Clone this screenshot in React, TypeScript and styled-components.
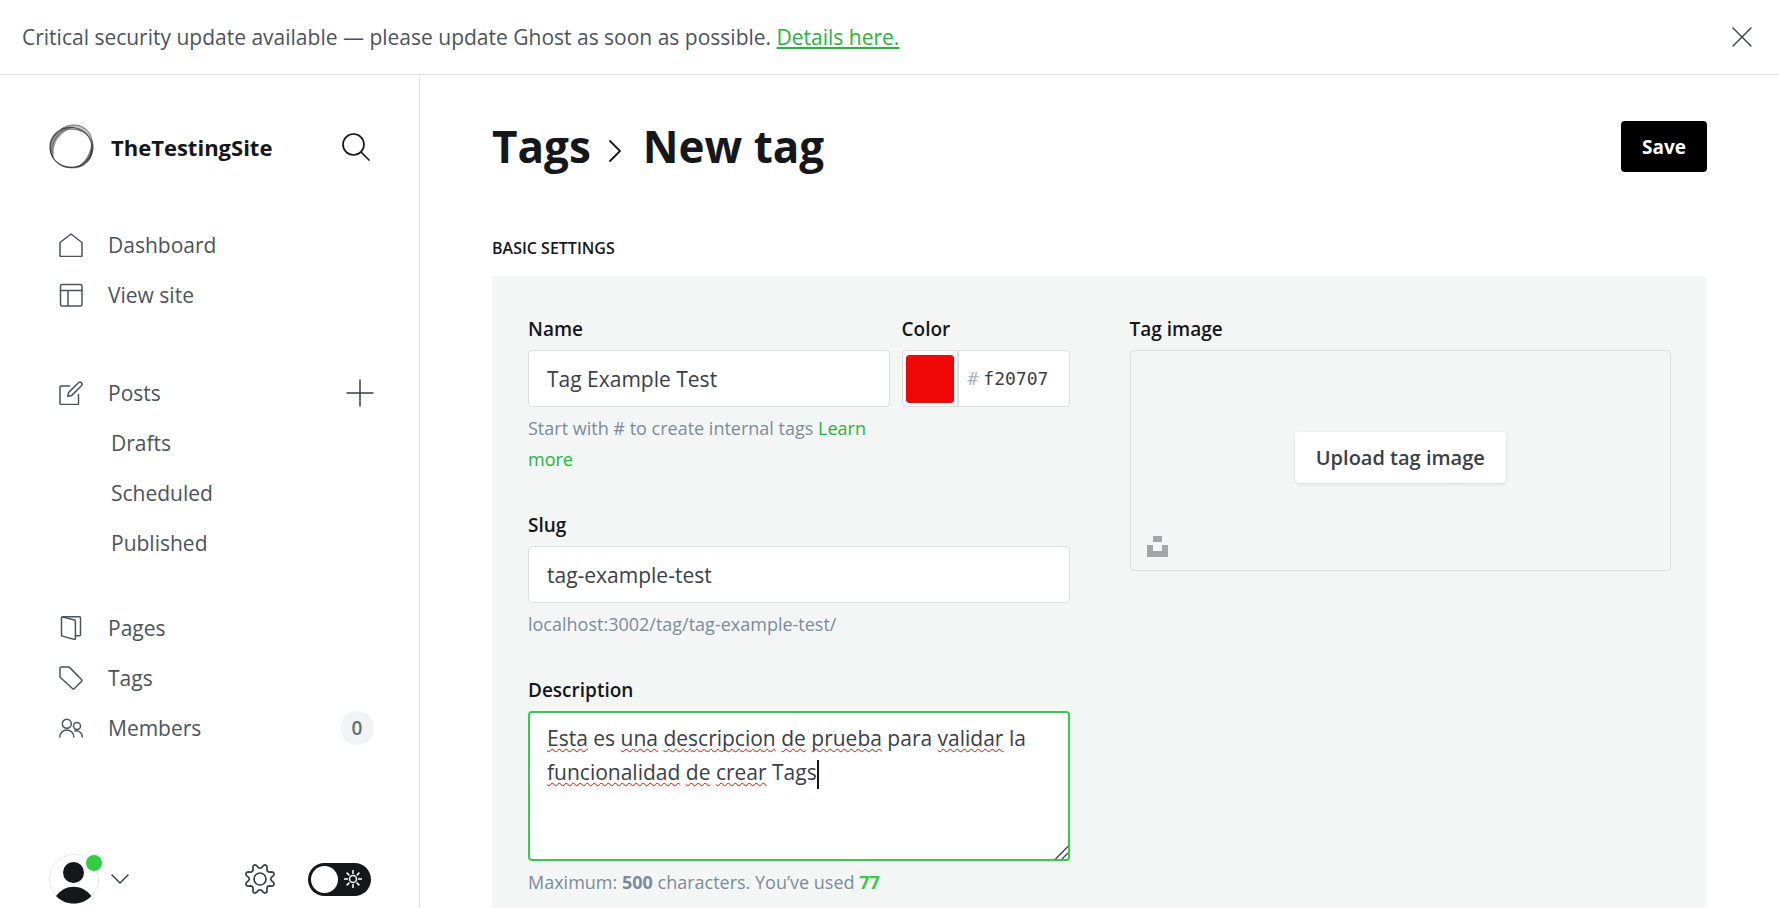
import React, { useState } from "react";
import styled, { createGlobalStyle, css } from "styled-components";

const c = {
  black: "#15171a",
  dark: "#394047",
  text: "#4b545d",
  mid: "#7c8b9a",
  line: "#dddfe1",
  side: "#e3e5e8",
  card: "#f4f6f6",
  green: "#30cf43",
  link: "#26b43a",
};
const sans = `"Open Sans", "Noto Sans", sans-serif`;

const GlobalStyle = createGlobalStyle`
  * { box-sizing: border-box; }
  body { margin: 0; font-family: ${sans}; color: ${c.black}; background: #fff; }
  button, input, textarea { font-family: inherit; margin: 0; }
  a { text-decoration: none; color: inherit; }
  svg { display: block; flex: none; }
`;

const Page = styled.div`
  display: flex;
  flex-direction: column;
  height: 100vh;
`;
const Banner = styled.div`
  display: flex;
  align-items: center;
  justify-content: space-between;
  flex: none;
  height: 75px;
  padding: 0 22px;
  border-bottom: 1px solid ${c.line};
  font-size: 21px;
  color: ${c.text};
`;
const BannerLink = styled.a`
  color: ${c.link};
  text-decoration: underline;
`;
const IconButton = styled.button`
  display: flex;
  align-items: center;
  justify-content: center;
  padding: 0;
  border: 0;
  background: none;
  color: ${c.dark};
  cursor: pointer;
`;
const Body = styled.div`
  display: flex;
  flex: 1;
  min-height: 0;
`;

const Sidebar = styled.nav`
  display: flex;
  flex-direction: column;
  flex: none;
  width: 420px;
  padding: 49px 45px 4px 49px;
  border-right: 1px solid ${c.side};
`;
const SiteHeader = styled.div`
  display: flex;
  align-items: center;
  gap: 17px;
  height: 45px;
  padding-right: 4px;
  margin-bottom: 51px;
`;
const SiteName = styled.div`
  flex: 1;
  font-size: 22px;
  font-weight: 700;
`;
const SearchButton = styled(IconButton)`
  color: ${c.black};
`;
const NavGroup = styled.ul`
  list-style: none;
  margin: 0 0 ${(p: { $gap?: number }) => p.$gap ?? 0}px;
  padding: 0;
`;
const NavRow = styled.li`
  display: flex;
  align-items: center;
  justify-content: space-between;
  height: 50px;
`;
const NavLink = styled.a<{ $sub?: boolean }>`
  display: flex;
  align-items: center;
  gap: 25px;
  padding-left: ${(p) => (p.$sub ? 62 : 10)}px;
  font-size: 21px;
  color: ${c.text};
`;
const Count = styled.span`
  display: flex;
  align-items: center;
  justify-content: center;
  width: 34px;
  height: 34px;
  border-radius: 50%;
  background: #f1f3f4;
  font-size: 19px;
  font-weight: 600;
  color: #626d79;
`;
const SideFooter = styled.div`
  display: flex;
  align-items: center;
  margin-top: auto;
  padding-right: 3px;
`;
const UserButton = styled(IconButton)`
  position: relative;
  gap: 12px;
  margin-right: auto;
`;
const Online = styled.span`
  position: absolute;
  top: 1px;
  left: 37px;
  width: 16px;
  height: 16px;
  border-radius: 50%;
  background: ${c.green};
`;
const Toggle = styled.label`
  position: relative;
  display: flex;
  align-items: center;
  justify-content: space-between;
  width: 63px;
  height: 33px;
  margin-left: 33px;
  padding: 0 9px 0 3px;
  border-radius: 17px;
  background: ${c.black};
  cursor: pointer;
`;
const ToggleInput = styled.input`
  position: absolute;
  inset: 0;
  width: 100%;
  height: 100%;
  margin: 0;
  opacity: 0;
`;
const Knob = styled.span`
  width: 27px;
  height: 27px;
  border-radius: 50%;
  background: #fff;
`;

const Main = styled.main`
  flex: 1;
  min-width: 0;
  padding: 46px 72px 72px;
  overflow-y: auto;
  scrollbar-width: none;
`;
const TopBar = styled.header`
  display: flex;
  align-items: center;
  justify-content: space-between;
  height: 51px;
  margin-bottom: 64px;
`;
const Title = styled.h1`
  display: flex;
  align-items: center;
  gap: 18px;
  margin: 0;
  font-size: 44px;
  line-height: 51px;
  font-weight: 700;

  svg {
    margin: 8px 4px 0 0;
  }
`;
const SaveButton = styled.button`
  height: 51px;
  padding: 0 21px;
  border: 0;
  border-radius: 4px;
  background: #000;
  color: #fff;
  font-size: 19px;
  font-weight: 700;
  cursor: pointer;
`;
const SectionTitle = styled.h2`
  margin: 0 0 16px;
  font-size: 16px;
  line-height: 24px;
  font-weight: 600;
  text-transform: uppercase;
`;
const Card = styled.section`
  display: grid;
  grid-template-columns: 1fr 1fr;
  align-items: start;
  gap: 60px;
  padding: 36px;
  border-radius: 4px;
  background: ${c.card};
`;
const Fields = styled.div`
  display: flex;
  flex-direction: column;
  gap: 33px;
`;
const Pair = styled.div`
  display: grid;
  grid-template-columns: 1fr 168px;
  gap: 12px;
`;
const Label = styled.label`
  display: block;
  margin-bottom: 4px;
  font-size: 19px;
  line-height: 34px;
  font-weight: 600;
`;
const fieldBox = css`
  width: 100%;
  border: 1px solid ${c.line};
  border-radius: 4px;
  background: #fff;
`;
const fieldText = css`
  font-size: 21px;
  line-height: 34px;
  color: ${c.dark};
`;
const TextInput = styled.input`
  ${fieldBox}
  ${fieldText}
  display: block;
  height: 57px;
  padding: 0 18px;
  outline: 0;
`;
const Help = styled.p`
  margin: 6px 0 0;
  font-size: 18px;
  line-height: 31px;
  color: ${c.mid};
`;
const HelpLink = styled.a`
  color: ${c.link};
`;
const Used = styled.b`
  color: ${c.green};
`;
const ColorBox = styled.div`
  ${fieldBox}
  display: flex;
  align-items: center;
  height: 57px;
  font-family: "DejaVu Sans Mono", monospace;
  font-size: 18px;
  color: #a8b2bd;
`;
const Swatch = styled.input`
  width: 48px;
  height: 48px;
  margin: 0 3px;
  padding: 0;
  border: 0;
  border-radius: 3px;
  background: none;
  &::-webkit-color-swatch-wrapper { padding: 0; }
  &::-webkit-color-swatch { border: 0; border-radius: 3px; }
`;
const HexPart = styled.div`
  display: flex;
  align-items: center;
  gap: 5px;
  flex: 1;
  height: 100%;
  padding-left: 9px;
  border-left: 2px solid ${c.line};
`;
const HexInput = styled.input`
  width: 72px;
  padding: 0;
  border: 0;
  outline: 0;
  background: none;
  font: inherit;
  color: ${c.dark};
`;
const AreaWrap = styled.div`
  position: relative;
`;
const areaText = css`
  ${fieldText}
  width: 100%;
  height: 150px;
  padding: 8px 17px;
`;
const Area = styled.textarea`
  ${areaText}
  display: block;
  border: 2px solid ${c.green};
  border-radius: 4px;
  background: #fff;
  outline: 0;
  resize: none;
`;
const SpellLayer = styled.div`
  ${areaText}
  position: absolute;
  inset: 0;
  border: 2px solid transparent;
  color: transparent;
  pointer-events: none;
  white-space: pre-wrap;
`;
const Misspelt = styled.span`
  text-decoration: underline wavy #f00 1px;
  text-underline-offset: 2px;
  text-decoration-skip-ink: none;
`;
const Caret = styled.span`
  display: inline-block;
  width: 2px;
  height: 29px;
  vertical-align: middle;
  background: ${c.black};
`;
const Grip = styled.svg`
  position: absolute;
  right: 2px;
  bottom: 2px;
`;
const ImageBox = styled.div`
  position: relative;
  display: flex;
  align-items: center;
  justify-content: center;
  height: 221px;
  padding-bottom: 6px;
  border: 1px solid ${c.line};
  border-radius: 4px;
`;
const UploadButton = styled.button`
  height: 51px;
  padding: 0 21px;
  border: 0;
  border-radius: 4px;
  background: #fff;
  box-shadow: 0 1px 3px rgba(0, 0, 0, 0.12);
  font-size: 20px;
  font-weight: 600;
  color: ${c.dark};
  cursor: pointer;
`;
const UnsplashButton = styled(IconButton)`
  position: absolute;
  left: 16px;
  bottom: 13px;
  color: #a3a6a6;
`;

const Icon = ({ size = 24, box = 24, w = 1.5, children }: { size?: number; box?: number; w?: number; children: React.ReactNode }) => (
  <svg width={size} height={size} viewBox={`0 0 ${box} ${box}`} fill="none" stroke="currentColor" strokeWidth={w} strokeLinecap="round" strokeLinejoin="round" aria-hidden="true">
    {children}
  </svg>
);

const SiteLogo = () => (
  <svg width="45" height="45" viewBox="0 0 45 45" fill="none" stroke="#222" aria-hidden="true">
    <g fill="#333" stroke="none">
      <path opacity=".3" d="M12 5C20 0 29-.5 35 4c4 2.500 7 7 7.500 12-2-4-6-7-11-8.500C26 5.500 19 5 12 5z" />
      <path opacity=".6" d="M42.500 14C46 22 45 31 39 38c-3 3-8 6-13 6 5-3 9-6 12-11 3-6 5-12 4.500-19z" />
      <path opacity=".5" d="M26 3C12 1-1 10 .5 25c.5 5 2 8 4.500 11C4 30 4.500 22 8 16c4-6 10-11 18-13z" />
      <path opacity=".45" d="M4 34c4 7 10 10.500 19 10.500 6 0 11-2 15-6-4 3-9 4-15 4-8 0-14-3-19-8.500z" />
    </g>
    <ellipse cx="22" cy="23.500" rx="20.800" ry="20" strokeWidth="1.100" opacity=".75" />
    <path d="M12 5C20 0 29-.5 35 4c5 3 7 7 7.500 11 3 8 1 17-4.500 23" strokeWidth=".9" opacity=".65" />
    <path d="M4 34C1 25 4 15 12 8c5-3 13-4 20-1 5 2 9 6 10.500 10" strokeWidth=".8" opacity=".6" />
  </svg>
);

const icons = {
  home: <Icon><path d="M1 9.500 12 1l11 8.500V22.500a1 1 0 0 1-1 1H2a1 1 0 0 1-1-1z" /></Icon>,
  site: <Icon><rect x="1.500" y="1.500" width="21.500" height="21.500" rx="1.500" /><path d="M1.500 7.500H23M9 7.500V23" /></Icon>,
  posts: <Icon><path d="M19.500 13.500v9a1 1 0 0 1-1 1h-16.500a1 1 0 0 1-1-1V6a1 1 0 0 1 1-1h8.500" /><path d="m12.500 14.600-3.700.7.700-3.700 9.900-9.900a2.100 2.100 0 0 1 3 3z" /></Icon>,
  pages: <Icon><path d="M3.500.8h17a1 1 0 0 1 1 1v17a1 1 0 0 1-1 1h-4" /><path d="m3.800.9 11.700 3a1 1 0 0 1 .9 1V22.600a.8.8 0 0 1-1 .8L3.300 20.100a1 1 0 0 1-.8-1V1.800a1 1 0 0 1 1.300-.9z" /></Icon>,
  tags: <Icon><path d="M1 2a1 1 0 0 1 1-1h7.500a1.500 1.500 0 0 1 1 .4l12.200 12.300a1 1 0 0 1 0 1.500l-7.500 7.500a1 1 0 0 1-1.500 0L1.400 11.500a1.500 1.500 0 0 1-.4-1z" /></Icon>,
  members: <Icon><circle cx="7.800" cy="7.800" r="4.500" /><path d="M.8 21a7 7 0 0 1 14 0" /><circle cx="18" cy="10" r="3.500" /><path d="M16 15a6 6 0 0 1 7.300 6" /></Icon>,
};

type Item = { label: string; icon?: React.ReactNode; end?: React.ReactNode };
const navGroups: { gap: number; items: Item[] }[] = [
  { gap: 48, items: [{ label: "Dashboard", icon: icons.home }, { label: "View site", icon: icons.site }] },
  {
    gap: 35,
    items: [
      { label: "Posts", icon: icons.posts, end: <IconButton aria-label="New post"><Icon size={28} box={28} w={1.5}><path d="M14 1v26M1 14h26" /></Icon></IconButton> },
      { label: "Drafts" },
      { label: "Scheduled" },
      { label: "Published" },
    ],
  },
  { gap: 0, items: [{ label: "Pages", icon: icons.pages }, { label: "Tags", icon: icons.tags }, { label: "Members", icon: icons.members, end: <Count>0</Count> }] },
];

const gearPath = (() => {
  const pts: string[] = [];
  const p = (r: number, deg: number) => {
    const a = (deg * Math.PI) / 180;
    return `${(15 + r * Math.cos(a)).toFixed(2)} ${(15 + r * Math.sin(a)).toFixed(2)}`;
  };
  for (let i = 0; i < 8; i++) {
    const a = 22.5 + i * 45;
    pts.push(`${i ? "L" : "M"}${p(13.6, a - 9)} Q${p(15.2, a - 5)} ${p(15, a)} Q${p(15.2, a + 5)} ${p(13.6, a + 9)} L${p(11.8, a + 13)} Q${p(10, a + 22.5)} ${p(11.8, a + 32)}`);
  }
  return pts.join(" ") + "Z";
})();

export default function App() {
  const [name, setName] = useState("Tag Example Test");
  const [hex, setHex] = useState("f20707");
  const [slug, setSlug] = useState("tag-example-test");
  const description = "Esta es una descripcion de prueba para validar la funcionalidad de crear Tags";
  const unknown = ["Esta", "una", "descripcion", "de", "prueba", "validar", "funcionalidad", "crear"];
  return (
    <Page>
      <GlobalStyle />
      <Banner>
        <span>
          Critical security update available — please update Ghost as soon as possible. <BannerLink href="#details">Details here.</BannerLink>
        </span>
        <IconButton aria-label="Close">
          <Icon size={30} box={30} w={1.4}><path d="m6 6 18 18M24 6 6 24" /></Icon>
        </IconButton>
      </Banner>
      <Body>
        <Sidebar>
          <SiteHeader>
            <SiteLogo />
            <SiteName>TheTestingSite</SiteName>
            <SearchButton aria-label="Search">
              <Icon size={28} box={28} w={1.7}><circle cx="11.500" cy="11.500" r="10.500" /><path d="m19 19 8 8" /></Icon>
            </SearchButton>
          </SiteHeader>
          {navGroups.map((g, i) => (
            <NavGroup key={i} $gap={g.gap}>
              {g.items.map((it) => (
                <NavRow key={it.label}>
                  <NavLink href={`#${it.label}`} $sub={!it.icon}>{it.icon}{it.label}</NavLink>
                  {it.end}
                </NavRow>
              ))}
            </NavGroup>
          ))}
          <SideFooter>
            <UserButton aria-label="Account">
              <svg width="50" height="50" viewBox="0 0 50 50" aria-hidden="true">
                <circle cx="25" cy="25" r="24.500" fill="#fff" stroke="#e8eaec" />
                <circle cx="24.500" cy="18.500" r="10.500" fill={c.black} />
                <path d="M7 42C16 29.500 33 29.500 42.500 42 33 52 16.500 52 7 42z" fill={c.black} />
              </svg>
              <Online />
              <Icon size={18} box={18} w={1.5}><path d="m1 5 8 8 8-8" /></Icon>
            </UserButton>
            <IconButton aria-label="Settings">
              <Icon size={30} box={30} w={1.7}><path d={gearPath} /><circle cx="15" cy="15" r="6" /></Icon>
            </IconButton>
            <Toggle>
              <ToggleInput type="checkbox" aria-label="Night mode" />
              <Knob />
              <svg width="18" height="18" viewBox="0 0 18 18" fill="none" stroke="#fff" strokeWidth="1.500" aria-hidden="true">
                <circle cx="9" cy="9" r="3.500" />
                <path d="M9 0v4M9 14v4M0 9h4M14 9h4M2.600 2.600l2.800 2.800M12.600 12.600l2.800 2.800M2.600 15.400l2.800-2.800M12.600 5.400l2.800-2.800" />
              </svg>
            </Toggle>
          </SideFooter>
        </Sidebar>
        <Main>
          <TopBar>
            <Title>
              <a href="#tags">Tags</a>
              <svg width="12" height="24" viewBox="0 0 12 24" fill="none" stroke="currentColor" strokeWidth="1.800" strokeLinecap="round" strokeLinejoin="round" aria-hidden="true">
                <path d="m1 2 10 10L1 22" />
              </svg>
              New tag
            </Title>
            <SaveButton>Save</SaveButton>
          </TopBar>
          <SectionTitle>Basic settings</SectionTitle>
          <Card>
            <Fields>
              <Pair>
                <div>
                  <Label htmlFor="name">Name</Label>
                  <TextInput id="name" value={name} onChange={(e) => setName(e.target.value)} />
                  <Help>Start with # to create internal tags <HelpLink href="#learn">Learn more</HelpLink></Help>
                </div>
                <div>
                  <Label htmlFor="hex">Color</Label>
                  <ColorBox>
                    <Swatch type="color" aria-label="Pick a color" value={`#${hex}`} onChange={(e) => setHex(e.target.value.slice(1))} />
                    <HexPart>
                      #
                      <HexInput id="hex" value={hex} onChange={(e) => setHex(e.target.value)} />
                    </HexPart>
                  </ColorBox>
                </div>
              </Pair>
              <div>
                <Label htmlFor="slug">Slug</Label>
                <TextInput id="slug" value={slug} onChange={(e) => setSlug(e.target.value)} />
                <Help>localhost:3002/tag/{slug}/</Help>
              </div>
              <div>
                <Label htmlFor="description">Description</Label>
                <AreaWrap>
                  <Area id="description" defaultValue={description} />
                  <SpellLayer aria-hidden="true">
                    {description.split(" ").map((word, i) => (
                      <React.Fragment key={i}>
                        {i > 0 && " "}
                        {unknown.includes(word) ? <Misspelt>{word}</Misspelt> : word}
                      </React.Fragment>
                    ))}
                    <Caret />
                  </SpellLayer>
                  <Grip width="13" height="13" viewBox="0 0 13 13" fill="none" stroke="#444" strokeWidth="1.400" aria-hidden="true">
                    <path d="M.5 13 13 .5M7 13l6-6" />
                  </Grip>
                </AreaWrap>
                <Help>Maximum: <b>500</b> characters. You’ve used <Used>{description.length}</Used></Help>
              </div>
            </Fields>
            <div>
              <Label as="div">Tag image</Label>
              <ImageBox>
                <UploadButton>Upload tag image</UploadButton>
                <UnsplashButton aria-label="Unsplash">
                  <svg width="21" height="21" viewBox="0 0 21 21" fill="currentColor" aria-hidden="true">
                    <path d="M6 0h9v6H6zM0 9h6v6h9V9h6v12H0z" />
                  </svg>
                </UnsplashButton>
              </ImageBox>
            </div>
          </Card>
        </Main>
      </Body>
    </Page>
  );
}
